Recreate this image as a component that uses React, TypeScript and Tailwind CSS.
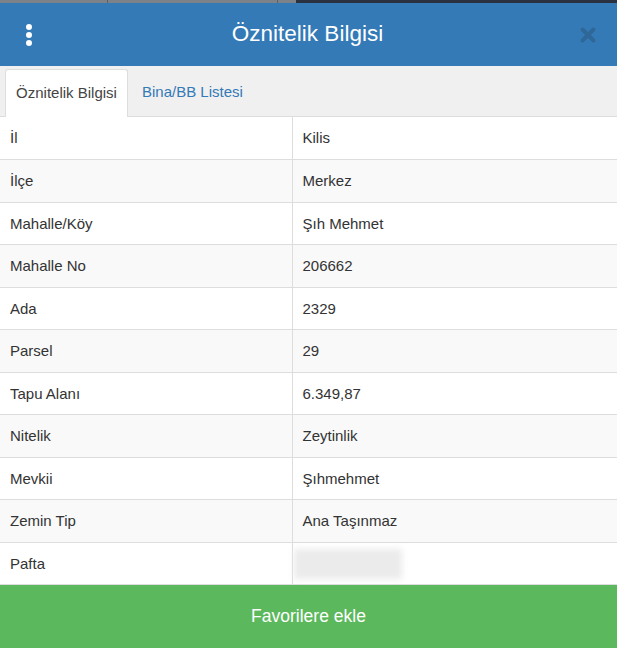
const rows: [string, string][] = [
  ["İl", "Kilis"],
  ["İlçe", "Merkez"],
  ["Mahalle/Köy", "Şıh Mehmet"],
  ["Mahalle No", "206662"],
  ["Ada", "2329"],
  ["Parsel", "29"],
  ["Tapu Alanı", "6.349,87"],
  ["Nitelik", "Zeytinlik"],
  ["Mevkii", "Şıhmehmet"],
  ["Zemin Tip", "Ana Taşınmaz"],
  ["Pafta", ""],
];

export default function App() {
  return (
    <main className="w-[617px] h-[648px] flex flex-col bg-white text-[#333] font-['Liberation_Sans',Arial,sans-serif] overflow-hidden">
      {/* strip of the page behind the modal */}
      <div className="h-[3px] flex shrink-0">
        <div className="w-[108px] bg-[#7c8288] border-r border-[#5c6268]"></div>
        <div className="w-[170px] bg-[#7c8288] border-r border-[#5c6268]"></div>
        <div className="w-[18px] bg-[#7c8288]"></div>
        <div className="flex-1 bg-[#2a3140]"></div>
      </div>

      <header className="h-[63px] shrink-0 bg-[#337ab7] flex items-center px-[26px]">
        <div className="flex flex-col gap-[2px] w-[6px]">
          <span className="w-[6px] h-[6px] rounded-full bg-white"></span>
          <span className="w-[6px] h-[6px] rounded-full bg-white"></span>
          <span className="w-[6px] h-[6px] rounded-full bg-white"></span>
        </div>
        <h1 className="flex-1 text-center text-white text-[22.5px] leading-none pl-[4px]">Öznitelik Bilgisi</h1>
        <svg width="18" height="18" viewBox="0 0 18 18" className="mr-[-6px]">
          <path d="M3.5 3.5 L14.5 14.5 M14.5 3.5 L3.5 14.5" stroke="#2f6898" strokeWidth="4" strokeLinecap="round" />
        </svg>
      </header>

      <nav className="h-[51px] shrink-0 bg-[#f0f0f0] flex items-end pl-[5px] border-b border-[#dddddd]">
        <div className="h-[48px] w-[123px] bg-white border border-b-0 border-[#dddddd] rounded-t-[3px] flex items-center justify-center text-[15px] text-[#444] mb-[-1px]">
          Öznitelik Bilgisi
        </div>
        <div className="h-[48px] px-[14px] flex items-center text-[15px] text-[#337ab7]">Bina/BB Listesi</div>
      </nav>

      <table className="w-full border-collapse text-[15px] table-fixed">
        <tbody>
          {rows.map(([k, v], i) => (
            <tr key={k} className={i % 2 === 0 ? "bg-white" : "bg-[#f9f9f9]"}>
              <td className="w-[292px] h-[42.5px] px-[10px] pt-[1px] border-b border-r border-[#dddddd] text-[#333]">{k}</td>
              <td className="h-[42.5px] px-[10px] pt-[1px] border-b border-[#dddddd] text-[#333]">
                {k === "Pafta" ? (
                  <div className="w-[108px] h-[30px] ml-[-9px] bg-[#ebebeb] blur-[3px]"></div>
                ) : (
                  v
                )}
              </td>
            </tr>
          ))}
        </tbody>
      </table>

      <button className="mt-auto h-[63px] shrink-0 w-full bg-[#5cb85c] text-white text-[17.5px]">Favorilere ekle</button>
    </main>
  );
}
